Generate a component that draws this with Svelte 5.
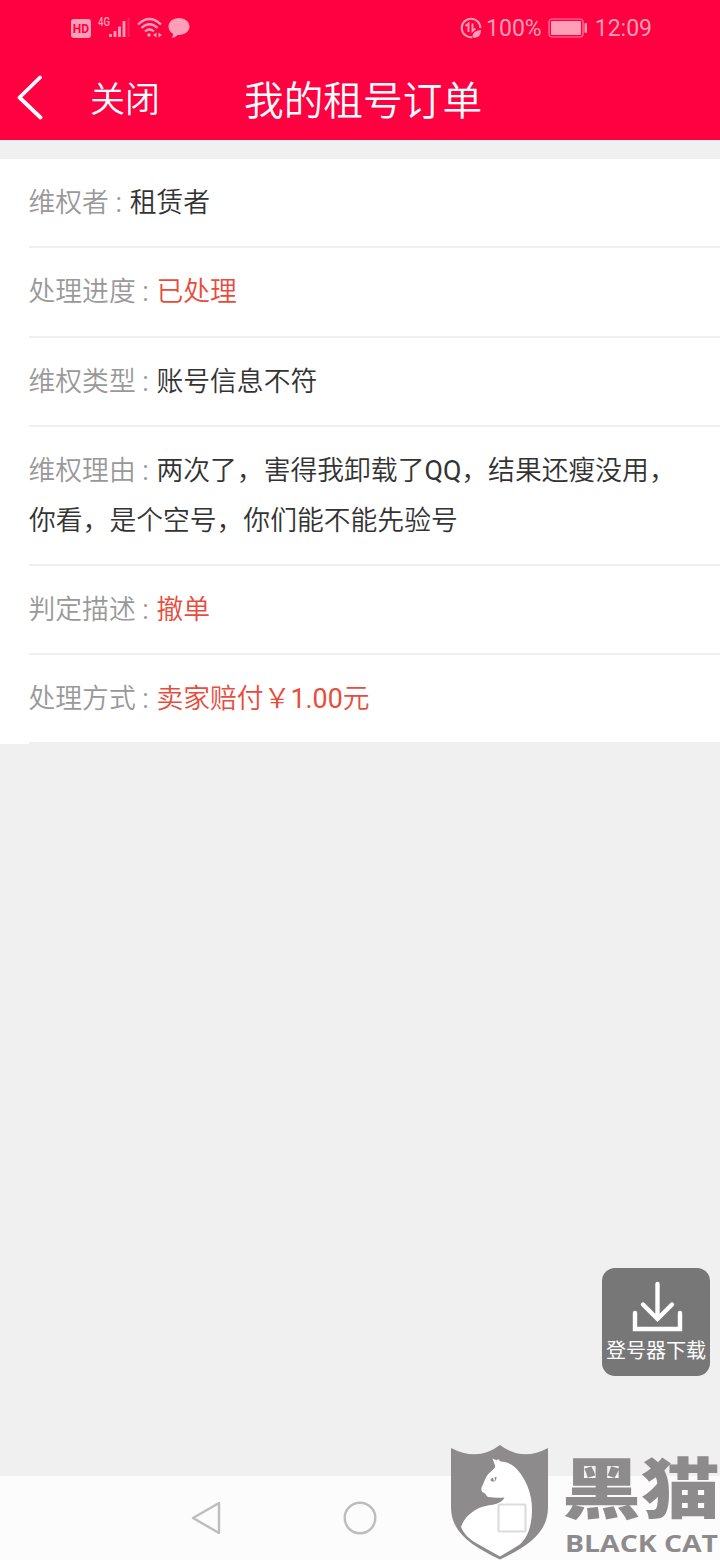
<script lang="ts">
    type Row = { label: string, value: string, red?: boolean };

    let rows: Row[] = [
        { label: "维权者", value: "租赁者" },
        { label: "处理进度", value: "已处理", red: true },
        { label: "维权类型", value: "账号信息不符" },
        { label: "维权理由", value: "两次了，害得我卸载了QQ，结果还瘦没用，你看，是个空号，你们能不能先验号" },
        { label: "判定描述", value: "撤单", red: true },
        { label: "处理方式", value: "卖家赔付￥1.00元", red: true },
    ];

    // latin runs get a heavier weight than the chinese text around them
    function split(text: string) {
        return text.split(/([A-Za-z0-9.]+)/).filter((s) => s);
    }
</script>

<div class="screen">
    <header>
        <div class="status">
            <div class="status-left">
                <span class="hd">HD</span>
                <span class="net">4G</span>
                <svg class="signal" width="22" height="20" viewBox="0 0 22 20">
                    <path d="M1.5 16v3M6 13v6M10.5 8.500v10.500M15 3v16" stroke="currentColor" stroke-width="2.800" />
                    <path d="M19.500 0v19" stroke="currentColor" stroke-width="2" opacity=".25" />
                </svg>
                <svg class="wifi" width="26" height="22" viewBox="0 0 26 22">
                    <g fill="none" stroke="currentColor" stroke-width="2.200">
                        <path d="M1 7.500Q12.500-3.500 24 7.500" />
                        <path d="M4.500 11Q12.500 3.500 20.500 11" />
                        <path d="M8 14.500Q12.500 10.500 17 14.500" />
                    </g>
                    <circle cx="12" cy="18" r="1.800" fill="currentColor" />
                    <path d="M16 18l3.500-2.500v5zM25 18l-3.500-2.500v5z" fill="currentColor" />
                </svg>
                <svg width="22" height="22" viewBox="0 0 22 22">
                    <path d="M11 1C5 1 .500 4.700.500 9.500c0 3.300 1.700 5.700 4.500 7.200 0 1.500-.400 3-1.300 4 2.500-.100 4.300-1 5.800-2.800l1.500.100c6 0 10.500-3.700 10.500-8.500S17 1 11 1z" fill="currentColor" />
                </svg>
            </div>
            <div class="status-right">
                <svg width="22" height="22" viewBox="0 0 22 22">
                    <path d="M12 20.200A9.300 9.300 0 1 1 20.300 11" fill="none" stroke="currentColor" stroke-width="2" />
                    <path d="M5.500 9l3-2.500V15M12.500 6.500V14l3-2.500" fill="none" stroke="currentColor" stroke-width="1.900" />
                    <path d="M12.500 20.500c-.500-4.500 3-7 8.500-7.500 0 5-2.500 8.500-8.500 7.500z" fill="currentColor" />
                </svg>
                <span class="percent">100%</span>
                <svg class="battery" width="40" height="20" viewBox="0 0 40 20">
                    <rect x="1" y="1" width="34" height="18" rx="3" fill="none" stroke="currentColor" stroke-width="1.200" opacity=".8" />
                    <rect x="3" y="3" width="30" height="14" rx="1" fill="currentColor" />
                    <rect x="36.500" y="5" width="2.500" height="10" rx="1" fill="currentColor" />
                </svg>
                <span>12:09</span>
            </div>
        </div>
        <div class="titlebar">
            <svg class="back" width="28" height="46" viewBox="0 0 28 46">
                <path d="M24 3.500L3.500 23.500L24.500 43.500" fill="none" stroke="#fff" stroke-width="3.800" stroke-linecap="round" stroke-linejoin="round" />
            </svg>
            <span class="close">关闭</span>
            <h1>我的租号订单</h1>
        </div>
    </header>

    <main>
        <div class="list">
            {#each rows as row}
                <div class="row">
                    <span class="label">{row.label}<span class="latin">&nbsp;:&nbsp;</span></span><span class="value" class:red={row.red}>{#each split(row.value) as part}<span class:latin={/^[\w.]+$/.test(part)}>{part}</span>{/each}</span>
                </div>
            {/each}
        </div>
    </main>

    <nav>
        <svg width="32" height="36" viewBox="0 0 32 36">
            <path d="M29 3v30L3 18z" fill="none" stroke="#bdbdbd" stroke-width="2.400" stroke-linejoin="round" />
        </svg>
        <svg width="36" height="36" viewBox="0 0 36 36">
            <circle cx="18" cy="18" r="15.300" fill="none" stroke="#bdbdbd" stroke-width="2.400" />
        </svg>
        <span class="nav-gap"></span>
    </nav>

    <div class="download">
        <svg width="54" height="54" viewBox="0 0 54 54">
            <path d="M26.500 4v34M12 24.500l14.500 14.500 14.500-14.500M4 33v16h45V33" fill="none" stroke="#fff" stroke-width="4.400" stroke-linecap="round" stroke-linejoin="miter" />
        </svg>
        <span>登号器下载</span>
    </div>

    <svg class="watermark" width="280" height="125" viewBox="0 0 280 125">
        <path d="M11 13Q38 27 60 10Q82 27 108 13V72C108 98 88 111 60 124.500C32 111 11 98 11 72Z" fill="#8d8b8c" />
        <path d="M52.500 23.500L57 25.500L58 24L60.500 26.500C70 27 74 31 78 35.500C87 46 92 60 92 74C92 90 88 103 79 110L60 121.500L36 108C29 104 24 99 21 92C24 83 31 77 39 73C47 70 52 70 56 69C60 67.500 63 66 64.500 62.500C58 63 53 62.500 48 62C45 60 46 58 43 57.500C41 56 41 53 42 51.500C45 46 45 41 51 36.500C53 34.500 56 33 55 30.500Z" fill="#fff" />
        <path d="M50.500 44.500q2-3 6-2.500q0 5-4 4.500q-2 0-2-2z" fill="#8d8b8c" />
        <path d="M53.500 41.500l1 4" stroke="#fff" stroke-width="1.500" />
        <rect x="58.500" y="69.500" width="27" height="27" rx="1" fill="none" stroke="#dcdcdc" stroke-width="2.200" />
        <text class="cn" x="122" y="78" textLength="158" lengthAdjust="spacingAndGlyphs">黑猫</text>
        <text class="en" x="125" y="117" textLength="153" lengthAdjust="spacingAndGlyphs">BLACK CAT</text>
    </svg>
</div>

<style>
    :global(body) {
        margin: 0;
        background: #f0f0f0;
    }

    .screen {
        position: relative;
        display: flex;
        flex-direction: column;
        width: 720px;
        height: 1560px;
        overflow: hidden;
        background: #f0f0f0;
        color: #333;
        font-family: Roboto, "Noto Sans CJK SC", sans-serif;
    }

    header {
        height: 140px;
        background: #ff0040;
        color: #fff;
    }

    .status {
        display: flex;
        justify-content: space-between;
        height: 56px;
        padding: 0 68px 0 71px;
        color: #ff9fb7;
        font-size: 23px;
    }

    .status-left,
    .status-right {
        display: flex;
        align-items: center;
    }

    .hd {
        width: 20px;
        height: 19px;
        border-radius: 3px;
        background: #ff9fb7;
        color: #ff0040;
        font-size: 12px;
        font-weight: 700;
        line-height: 20px;
        text-align: center;
    }

    .net {
        align-self: flex-start;
        margin: 15px 0 0 7px;
        width: 11px;
        font-size: 12px;
        font-weight: 500;
        line-height: 14px;
        transform: scaleX(.8);
        transform-origin: left;
    }

    .signal {
        margin-right: 6px;
    }

    .wifi {
        margin-right: 5px;
    }

    .percent {
        margin: 0 6px 0 4px;
    }

    .battery {
        margin-right: 7px;
    }

    .titlebar {
        display: flex;
        align-items: center;
        height: 84px;
    }

    .back {
        margin: -3px 0 0 16px;
    }

    .close {
        margin: -3px 0 0 46px;
        width: 154px;
        font-size: 35px;
        font-weight: 350;
    }

    h1 {
        margin: -2px 0 0;
        font-size: 39.700px;
        font-weight: 350;
    }

    main {
        flex: 1;
        padding-top: 19px;
    }

    .list {
        padding-left: 29px;
        background: #fff;
    }

    .row {
        padding: 20.200px 40px 17.500px 0;
        border-bottom: 2px solid #efefef;
        font-size: 26.800px;
        font-weight: 350;
        line-height: 49.600px;
    }

    .label {
        margin-left: -.500px;
        color: #999;
    }

    .value {
        margin-left: 1px;
    }

    .latin {
        font-weight: 400;
    }

    .red {
        color: #e74c3c;
    }

    nav {
        display: flex;
        align-items: center;
        justify-content: space-between;
        box-sizing: border-box;
        height: 84px;
        padding: 0 190px;
        background: #fcfcfc;
    }

    .nav-gap {
        width: 32px;
    }

    .download {
        position: absolute;
        top: 1268px;
        left: 602px;
        display: flex;
        flex-direction: column;
        align-items: center;
        box-sizing: border-box;
        width: 108px;
        height: 108px;
        padding-top: 12px;
        border-radius: 13px;
        background: #777;
        color: #fff;
        font-size: 20px;
        line-height: 34px;
        white-space: nowrap;
    }

    .download svg {
        margin-left: 3px;
    }

    .watermark {
        position: absolute;
        right: 0;
        bottom: 0;
    }

    .watermark text {
        fill: #8d8b8c;
    }

    .cn {
        font-family: "Noto Sans CJK SC", sans-serif;
        font-size: 66px;
        font-weight: 900;
    }

    .en {
        font-family: "Open Sans", sans-serif;
        font-size: 23px;
        font-weight: 700;
    }
</style>
